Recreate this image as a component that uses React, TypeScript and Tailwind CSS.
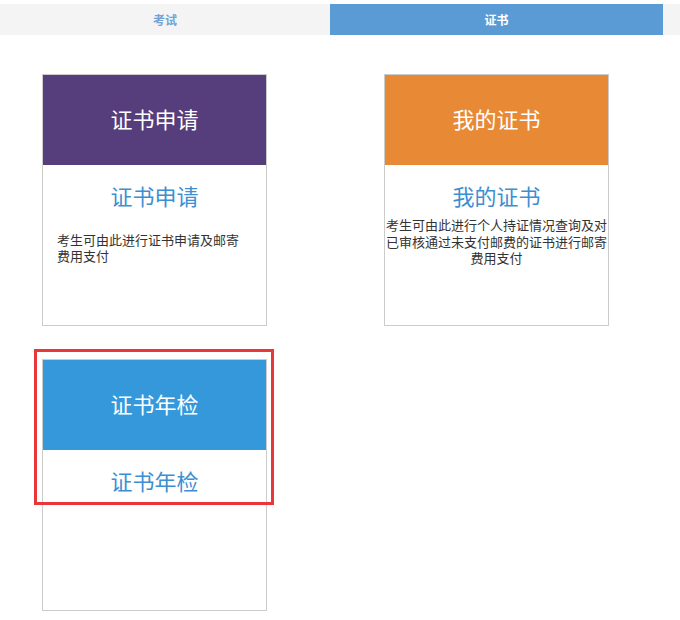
import React from "react";

const font = { fontFamily: '"Microsoft YaHei", "Noto Sans CJK SC", "Noto Sans", sans-serif' };

function Card({
  color,
  title,
  desc,
  descClass,
}: {
  color: string;
  title: string;
  desc?: string;
  descClass?: string;
}) {
  return (
    <div className="w-[225px] h-[252px] border border-[#cccccc] bg-white">
      <div className={`h-[90px] pb-[3px] flex items-center justify-center text-white text-[22px] ${color}`}>
        {title}
      </div>
      <div className="pt-[14px] text-center text-[22px] leading-[32px] text-[#3d8fd1]">{title}</div>
      {desc ? <div className={descClass}>{desc}</div> : null}
    </div>
  );
}

export default function App() {
  return (
    <div className="w-[680px] h-[620px] bg-white relative" style={font}>
      <div className="h-[4px]" />
      <div className="h-[31px] flex bg-[#f4f4f4] text-[12px] font-bold">
        <div className="w-[330px] flex items-center justify-center text-[#72a3d3]">考试</div>
        <div className="w-[333px] flex items-center justify-center bg-[#5b9bd5] text-white">证书</div>
      </div>
      <div className="grid grid-cols-[225px_225px] gap-x-[117px] gap-y-[33px] pl-[42px] pt-[39px]">
        <Card
          color="bg-[#563d7c]"
          title="证书申请"
          desc="考生可由此进行证书申请及邮寄费用支付"
          descClass="mt-[21px] pl-[14px] pr-[26px] text-[13px] leading-[16px] text-[#333333]"
        />
        <Card
          color="bg-[#e88a35]"
          title="我的证书"
          desc="考生可由此进行个人持证情况查询及对已审核通过未支付邮费的证书进行邮寄费用支付"
          descClass="mt-[6px] text-center text-[13px] leading-[16.5px] text-[#333333]"
        />
        <Card color="bg-[#3498db]" title="证书年检" />
      </div>
      <div className="absolute left-[34px] top-[349px] w-[240px] h-[156px] border-[3px] border-[#e8363b]" />
    </div>
  );
}
